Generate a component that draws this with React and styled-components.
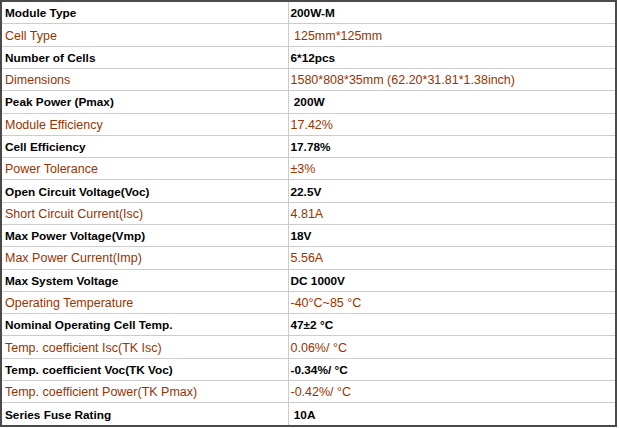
import React from 'react'
import styled, { createGlobalStyle } from 'styled-components'

const rows = [
	['Module Type', '200W-M'],
	['Cell Type', '\u00a0125mm*125mm'],
	['Number of Cells', '6*12pcs'],
	['Dimensions', '1580*808*35mm (62.20*31.81*1.38inch)'],
	['Peak Power (Pmax)', '\u00a0200W'],
	['Module Efficiency', '17.42%'],
	['Cell Efficiency', '17.78%'],
	['Power Tolerance', '±3%'],
	['Open Circuit Voltage(Voc)', '22.5V'],
	['Short Circuit Current(Isc)', '4.81A'],
	['Max Power Voltage(Vmp)', '18V'],
	['Max Power Current(Imp)', '5.56A'],
	['Max System Voltage', 'DC 1000V'],
	['Operating Temperature', '-40°C~85 °C'],
	['Nominal Operating Cell Temp.', '47±2 °C'],
	['Temp. coefficient Isc(TK Isc)', '0.06%/ °C'],
	['Temp. coefficient Voc(TK Voc)', '-0.34%/ °C'],
	['Temp. coefficient Power(TK Pmax)', '-0.42%/ °C'],
	['Series Fuse Rating', '\u00a010A'],
]

function App() {
	return (
		<>
			<GlobalStyle />
			<SpecTable>
				<colgroup>
					<col style={{ width: '287px' }} />
					<col />
				</colgroup>
				<tbody>
					{rows.map(([label, value], i) => (
						<tr key={label}>
							<Cell $alt={i % 2 === 1}>{label}</Cell>
							<ValueCell $alt={i % 2 === 1}>{value}</ValueCell>
						</tr>
					))}
				</tbody>
			</SpecTable>
		</>
	)
}

export default App

const GlobalStyle = createGlobalStyle`
	body {
		margin: 0;
		background: #fff;
		font-family: "Liberation Sans", Arial, sans-serif;
	}
`
const SpecTable = styled.table`
	width: 617px;
	height: 427px;
	border-collapse: collapse;
	table-layout: fixed;
	border: 2px solid #4a4a4a;
`
const Cell = styled.td`
	border: 1px solid #cccccc;
	padding: 1px 0 0 3px;
	vertical-align: middle;
	white-space: nowrap;
	color: ${(p) => (p.$alt ? '#993300' : '#000')};
	font-weight: ${(p) => (p.$alt ? 'normal' : 'bold')};
	font-size: ${(p) => (p.$alt ? '12.5px' : '11.8px')};
`
const ValueCell = styled(Cell)`
	padding-left: 2px;
`
